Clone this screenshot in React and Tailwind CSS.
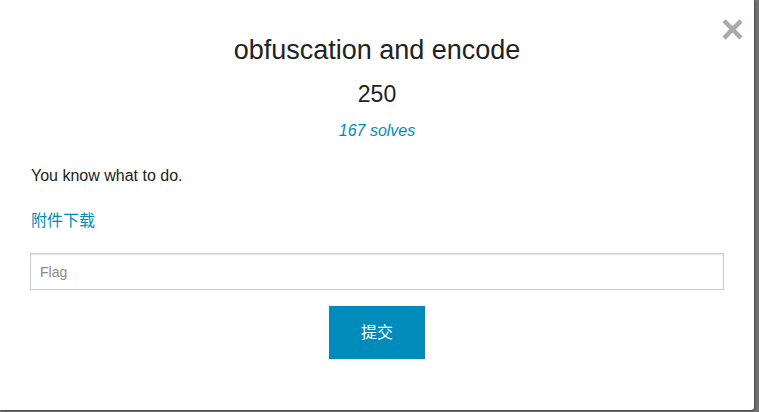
export default function App() {
  return (
    <div className="w-[759px] h-[412px] bg-[#737373] overflow-hidden" style={{ fontFamily: '"Liberation Sans", Arial, "Noto Sans CJK SC", sans-serif' }}>
      <div className="relative w-[754px] h-[410px] bg-white rounded-br-[3px] shadow-[1px_1px_2px_rgba(0,0,0,0.4)] flex flex-col">
        <button className="absolute right-[10px] top-[9px] text-[40px] leading-none font-bold text-[#aaaaaa]">×</button>
        <div className="flex flex-col items-center pt-[33px]">
          <h2 className="text-[27px] leading-[34px] text-[#222222]">obfuscation and encode</h2>
          <div className="mt-[13px] text-[23px] leading-[28px] text-[#222222]">250</div>
          <div className="mt-[13px] text-[16px] leading-[20px] italic text-[#008cba]">167 solves</div>
        </div>
        <div className="px-[31px] mt-[25px] text-[16px] leading-[20px] text-[#222222]">You know what to do.</div>
        <div className="px-[31px] mt-[25px] text-[16px] leading-[20px] text-[#008cba]">附件下载</div>
        <div className="px-[30px] mt-[22px]">
          <input
            className="w-[694px] h-[37px] border border-[#cccccc] px-[9px] text-[14px] text-[#222222] placeholder-[#8a8a8a] outline-none shadow-[inset_0_1px_2px_rgba(0,0,0,0.1)]"
            placeholder="Flag"
          />
        </div>
        <div className="flex justify-center mt-[16px]">
          <button className="w-[96px] h-[53px] bg-[#008cba] text-white text-[16px]">提交</button>
        </div>
      </div>
    </div>
  );
}
